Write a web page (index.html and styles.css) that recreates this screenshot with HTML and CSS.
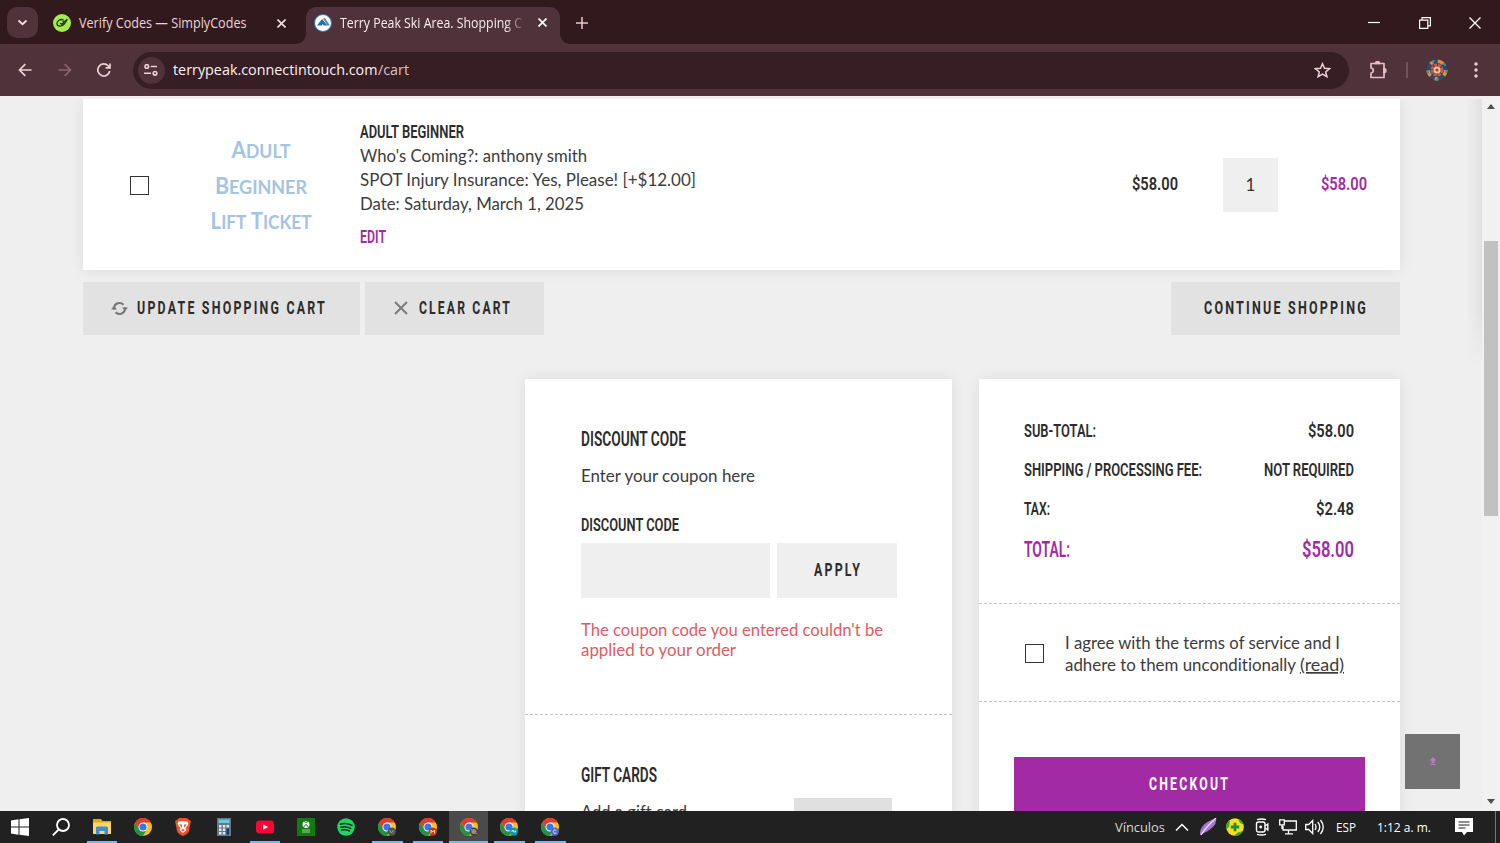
FILE: index.html
```html
<!DOCTYPE html>
<html lang="en">
<head>
<meta charset="utf-8">
<title>Terry Peak Ski Area. Shopping Cart</title>
<link rel="stylesheet" href="styles.css">
</head>
<body>
<svg class="defs" width="0" height="0">
  <symbol id="chrome" viewBox="0 0 18 18">
    <circle cx="9" cy="9" r="9" fill="#fbc116"/>
    <path d="M1.2 4.5A9 9 0 0 1 16.8 4.5H9L5.1 11.2Z" fill="#e33b2e"/>
    <path d="M1.2 4.5A9 9 0 0 0 9 18l3.9-6.8H5.1Z" fill="#229342"/>
    <circle cx="9" cy="9" r="4.5" fill="#fff"/><circle cx="9" cy="9" r="3.6" fill="#3479ea"/>
  </symbol>
</svg>
<div class="screen">
  <header class="tabs">
    <div class="tab-menu"><svg width="30" height="30" fill="none" stroke="#f3dfe2" stroke-width="1.8"><path d="m11.5 13.500 4 3.700 4-3.700"/></svg></div>
    <div class="tab">
      <svg width="18" height="18" viewBox="0 0 18 18"><circle cx="9" cy="9" r="9" fill="#a4ec4b"/><path d="M10.500 5.800C7 4.800 4 6.800 4 9.500c0 3.300 5.500 3.800 8-.5L14.300 5.200 8.800 10.300 7 9M9.500 7.300l4 .3" fill="none" stroke="#1f3414" stroke-width="1.300"/></svg>
      <svg class="t ui" width="168" height="20"><text y="15" textLength="167.500" lengthAdjust="spacingAndGlyphs">Verify Codes — SimplyCodes</text></svg>
      <svg class="close" width="9" height="9" stroke="#f3dfe2" stroke-width="1.600"><path d="m.5.5 8 8m0-8-8 8"/></svg>
    </div>
    <div class="tab active">
      <svg width="18" height="18" viewBox="0 0 18 18"><circle cx="9" cy="9" r="8.500" fill="#fff" stroke="#2c75ad"/><path d="m9 4.500 2-.5 5 7.500h-2.500z" fill="#6c8399"/><path d="M3 11.500 8 5l5.500 6.500H10L8.500 10 8 11.500z" fill="#1d6fb0"/></svg>
      <svg class="t ui bright fade" width="183" height="20"><text y="15" textLength="182" lengthAdjust="spacingAndGlyphs">Terry Peak Ski Area. Shopping C</text></svg>
      <svg class="close" width="9" height="9" stroke="#fff" stroke-width="1.700"><path d="m.5.5 8 8m0-8-8 8"/></svg>
    </div>
    <svg class="plus" width="12" height="12" stroke="#ebc6cc" stroke-width="1.500"><path d="M6 0v12M0 6h12"/></svg>
    <div class="window">
      <svg width="12" height="12" stroke="#fff" stroke-width="1.200"><path d="M0 5.500h12"/></svg>
      <svg width="12" height="12" fill="none" stroke="#fff" stroke-width="1.200"><path d="M.6 3.100h8.200v8.200H.6zM3 3V.6h8.400v8.200H9"/></svg>
      <svg width="12" height="12" stroke="#fff" stroke-width="1.300"><path d="m.5.5 11 11m0-11-11 11"/></svg>
    </div>
  </header>
  <nav class="toolbar">
    <svg class="nav" width="14" height="14" fill="none" stroke="#efd0d6" stroke-width="1.700"><path d="M13.500 7H1.500M7.300 1.200 1.500 7l5.800 5.800"/></svg>
    <svg class="nav" width="14" height="14" fill="none" stroke="#8a656d" stroke-width="1.700"><path d="M.5 7h12M6.700 1.200 12.500 7l-5.800 5.800"/></svg>
    <svg class="nav" width="14" height="14" fill="none" stroke="#efd0d6" stroke-width="1.700"><path d="M12.700 8A6 6 0 1 1 11.300 3l1.500 1.500M13 .5v4.300H8.600"/></svg>
    <div class="omnibox">
      <span class="site"><svg width="14" height="12" fill="none" stroke="#efd0d6" stroke-width="1.600"><circle cx="2.800" cy="2.500" r="1.800"/><path d="M6.800 2.500H13M0 9.300h7"/><circle cx="11" cy="9.300" r="1.800"/></svg></span>
      <svg class="t url" width="205" height="20"><text y="15" textLength="204.500" lengthAdjust="spacingAndGlyphs">terrypeak.connectintouch.com</text></svg>
      <svg class="t url path" width="31" height="20"><text y="15" textLength="31" lengthAdjust="spacingAndGlyphs">/cart</text></svg>
      <svg class="star" width="17" height="16" fill="none" stroke="#efd0d6" stroke-width="1.500"><path d="m8.500 1.700 2 4.500 5 .5-3.800 3.200 1.200 4.800-4.400-2.600-4.400 2.600 1.200-4.800L1.500 6.700l5-.5z"/></svg>
    </div>
    <svg class="ext" width="19" height="18" fill="none" stroke="#e9bcc5" stroke-width="1.700"><path d="M2 2.500H15V16.500H2V12a2.300 2.500 0 0 0 0-5z" stroke-linejoin="round"/><path d="M6.500 2.500a2 1.800 0 0 1 4 0zM15 7.500a1.800 2 0 0 1 0 4z" fill="#e9bcc5"/></svg>
    <span class="sep"></span>
    <svg class="avatar" width="22" height="22" fill="none"><circle cx="11" cy="11" r="10.500" fill="#2e496a"/><circle cx="11" cy="11" r="8.800" stroke="#e78c38" stroke-width="3.500" stroke-dasharray="6 7 3 5"/><circle cx="11" cy="11" r="9.500" stroke="#329aa5" stroke-width="2" stroke-dasharray="3 10"/><circle cx="11" cy="11" r="5" stroke="#cd5a45" stroke-width="3" stroke-dasharray="3 1"/><circle cx="11" cy="11" r="3.500" fill="#f2c494"/><circle cx="11" cy="11" r="1.600" fill="#a73f3a"/></svg>
    <svg class="dots" width="4" height="16" fill="#efd0d6"><circle cx="2" cy="2" r="1.700"/><circle cx="2" cy="8" r="1.700"/><circle cx="2" cy="14" r="1.700"/></svg>
  </nav>

  <main class="page">
    <div class="content">
      <section class="item">
        <span class="check"></span>
        <svg class="art" width="102" height="92" text-anchor="middle">
          <text x="51" y="18" textLength="59" lengthAdjust="spacingAndGlyphs">A<tspan class="sc">DULT</tspan></text>
          <text x="51" y="54" textLength="92" lengthAdjust="spacingAndGlyphs">B<tspan class="sc">EGINNER</tspan></text>
          <text x="51" y="89" textLength="101" lengthAdjust="spacingAndGlyphs">L<tspan class="sc">IFT</tspan> T<tspan class="sc">ICKET</tspan></text>
        </svg>
        <div class="info">
          <svg class="t fj" width="104" height="20"><text y="15" textLength="104" lengthAdjust="spacingAndGlyphs">ADULT BEGINNER</text></svg>
          <svg class="t la" width="227" height="24"><text y="19" textLength="227" lengthAdjust="spacingAndGlyphs">Who's Coming?: anthony smith</text></svg>
          <svg class="t la" width="336" height="24"><text y="19" textLength="336" lengthAdjust="spacingAndGlyphs">SPOT Injury Insurance: Yes, Please! [+$12.00]</text></svg>
          <svg class="t la" width="224" height="24"><text y="19" textLength="224" lengthAdjust="spacingAndGlyphs">Date: Saturday, March 1, 2025</text></svg>
          <svg class="t fj pink" width="26" height="33"><text y="28" textLength="26" lengthAdjust="spacingAndGlyphs">EDIT</text></svg>
        </div>
        <svg class="t fj price" width="46" height="20"><text y="15" textLength="46" lengthAdjust="spacingAndGlyphs">$58.00</text></svg>
        <span class="qty">1</span>
        <svg class="t fj pink sum" width="46" height="20"><text y="15" textLength="46" lengthAdjust="spacingAndGlyphs">$58.00</text></svg>
      </section>
      <section class="actions">
        <div class="btn update"><svg width="17" height="15" fill="none" stroke="#777" stroke-width="2"><path d="M3 8.500V7A5.500 5.500 0 0 1 12.500 3.700M14 6.500V8A5.500 5.500 0 0 1 4.500 11.300"/><path d="M0 8.500h6L3 5zM11 6.500h6L14 10z" fill="#777" stroke="none"/></svg>
          <svg class="t fj wide" width="188" height="20"><text y="16" textLength="190" lengthAdjust="spacingAndGlyphs">UPDATE SHOPPING CART</text></svg></div>
        <div class="btn clear"><svg width="14" height="14" stroke="#777" stroke-width="1.800"><path d="m1 1 12 12m0-12L1 13"/></svg>
          <svg class="t fj wide" width="91" height="20"><text y="16" textLength="93" lengthAdjust="spacingAndGlyphs">CLEAR CART</text></svg></div>
        <div class="btn continue"><svg class="t fj wide" width="162" height="20"><text y="16" textLength="164" lengthAdjust="spacingAndGlyphs">CONTINUE SHOPPING</text></svg></div>
      </section>
      <section class="panels">
        <div class="panel coupon">
          <div class="coupon-box">
            <svg class="t fj h" width="105" height="20"><text y="15" textLength="105" lengthAdjust="spacingAndGlyphs">DISCOUNT CODE</text></svg>
            <svg class="t la enter" width="174" height="20"><text y="15" textLength="174" lengthAdjust="spacingAndGlyphs">Enter your coupon here</text></svg>
            <svg class="t fj label" width="98" height="20"><text y="15" textLength="98" lengthAdjust="spacingAndGlyphs">DISCOUNT CODE</text></svg>
            <div class="field"><span class="input"></span><span class="apply"><svg class="t fj wide" width="46" height="20"><text y="15" textLength="48" lengthAdjust="spacingAndGlyphs">APPLY</text></svg></span></div>
            <svg class="t la error" width="302" height="20"><text y="15" textLength="302" lengthAdjust="spacingAndGlyphs">The coupon code you entered couldn't be</text></svg>
            <svg class="t la error2" width="155" height="20"><text y="15" textLength="155" lengthAdjust="spacingAndGlyphs">applied to your order</text></svg>
          </div>
          <div class="gift">
            <div class="gift-text">
              <svg class="t fj h" width="76" height="20"><text y="15" textLength="76" lengthAdjust="spacingAndGlyphs">GIFT CARDS</text></svg>
              <svg class="t la add" width="106" height="20"><text y="15" textLength="106" lengthAdjust="spacingAndGlyphs">Add a gift card</text></svg>
            </div>
            <span class="gift-btn"></span>
          </div>
        </div>
        <div class="panel totals">
          <div class="rows">
            <div class="row"><svg class="t fj" width="72" height="20"><text y="15" textLength="72" lengthAdjust="spacingAndGlyphs">SUB-TOTAL:</text></svg><svg class="t fj" width="46" height="20"><text y="15" textLength="46" lengthAdjust="spacingAndGlyphs">$58.00</text></svg></div>
            <div class="row"><svg class="t fj" width="178" height="20"><text y="15" textLength="178" lengthAdjust="spacingAndGlyphs">SHIPPING / PROCESSING FEE:</text></svg><svg class="t fj" width="90" height="20"><text y="15" textLength="90" lengthAdjust="spacingAndGlyphs">NOT REQUIRED</text></svg></div>
            <div class="row"><svg class="t fj" width="26" height="20"><text y="14.500" textLength="26" lengthAdjust="spacingAndGlyphs">TAX:</text></svg><svg class="t fj" width="38" height="20"><text y="14.500" textLength="38" lengthAdjust="spacingAndGlyphs">$2.48</text></svg></div>
            <div class="row grand"><svg class="t fj pink big" width="46" height="20"><text y="17" textLength="46" lengthAdjust="spacingAndGlyphs">TOTAL:</text></svg><svg class="t fj pink big" width="52" height="20"><text y="17" textLength="52" lengthAdjust="spacingAndGlyphs">$58.00</text></svg></div>
          </div>
          <div class="terms">
            <span class="check"></span>
            <div class="terms-text">
              <svg class="t la" width="275" height="22"><text y="15" textLength="275" lengthAdjust="spacingAndGlyphs">I agree with the terms of service and I</text></svg>
              <div class="line"><svg class="t la" width="231" height="22"><text y="15" textLength="231" lengthAdjust="spacingAndGlyphs">adhere to them unconditionally</text></svg>
              <svg class="t la read" width="44" height="22"><text y="15" textLength="44" lengthAdjust="spacingAndGlyphs">(read)</text></svg></div>
            </div>
          </div>
          <div class="pay"><div class="checkout"><svg class="t fj wide white" width="79" height="20"><text y="15" textLength="81" lengthAdjust="spacingAndGlyphs">CHECKOUT</text></svg></div></div>
        </div>
      </section>
    </div>
    <div class="edge"></div>
    <div class="scroll">
      <svg width="8" height="5" fill="#505050"><path d="M0 5 4 0l4 5z"/></svg>
      <span class="thumb"></span>
      <svg class="down" width="8" height="5" fill="#505050"><path d="m0 0 4 5 4-5z"/></svg>
    </div>
    <div class="top"><svg width="8" height="9" fill="#b77cc0"><path d="M4 0 .5 3.500H2.500v2.500h3V3.500h2zM1.500 6.800h5v1.200h-5z"/></svg></div>
  </main>

  <footer class="taskbar">
    <div class="apps">
      <span class="app"><svg width="18" height="18" fill="#fff"><path d="M0 2.500 7.500 1.300v7.300H0zM8.500 1.200 18 0v8.600H8.500zM0 9.500h7.500v7.200L0 15.600zM8.500 9.500H18V18l-9.500-1.200z"/></svg></span>
      <span class="app"><svg width="18" height="18" fill="none" stroke="#fff" stroke-width="1.800"><circle cx="11" cy="7" r="6"/><path d="M6.700 11.500.8 17.400"/></svg></span>
      <span class="app on"><svg width="18" height="18"><path d="M0 1h8l1.500 2H18v13H0z" fill="#e9a41e"/><path d="M0 4.500h18V16H0z" fill="#fbd76d"/><path d="M3 16.500V10q0-1.500 1.500-1.500h9Q15 8.500 15 10v6.500h-3.500V13h-5v3.500z" fill="#3e8fd0"/></svg></span>
      <span class="app"><svg width="18" height="18"><use href="#chrome"/></svg></span>
      <span class="app"><svg width="16" height="18"><path d="M4 0h8l1.500 1.500L16 3l-.7 3L14 13q-1 3-6 5-5-2-6-5L.7 6 0 3l2.500-1.500z" fill="#f0502a"/><path d="m8 3 4.500.5L13.500 6l-3 4.500L11.500 12 8 15l-3.500-3 1-1.500-3-4.500 1-2.500z" fill="#fff"/><path d="m4.500 6 2.500.8v3L5.500 8zM11.500 6 9 6.800v3L10.500 8zM6 12l2-1 2 1-2 1.500z" fill="#f0502a"/></svg></span>
      <span class="app"><svg width="14" height="18"><path d="M0 0h14v18H0z" fill="#64798a"/><path d="M1.500 1.500h11V5h-11z" fill="#63cbe5"/><path d="M2 7h2.500v2.500H2zm3.800 0h2.500v2.500H5.800zm3.700 0H12v2.500H9.500zM2 10.500h2.500V13H2zm3.800 0h2.500V13H5.800zM2 14h2.500v2.500H2zm3.800 0h2.500v2.500H5.800z" fill="#e2eaf0"/><path d="M9.500 10.500H12v6H9.500z" fill="#0f3d64"/></svg></span>
      <span class="app on"><svg width="18" height="14"><rect width="18" height="13" y=".5" rx="3.500" fill="#f60738"/><path d="m7 4.200 5 2.800-5 2.800z" fill="#fff"/></svg></span>
      <span class="app"><svg width="18" height="18"><path d="M0 0h18v18H0z" fill="#107c10"/><circle cx="9" cy="6.500" r="3.500" fill="#fff"/><path d="m6.500 9.300 2.500-3 2.500 3M7 3.500l2 1 2-1" fill="none" stroke="#107c10"/><path d="M5 12h8M5 14h8" stroke="#a5cfa5"/></svg></span>
      <span class="app"><svg width="18" height="18"><circle cx="9" cy="9" r="8.800" fill="#1ed760"/><path d="M3.500 6.200q6-1.800 11.500 1.300M4 9.200q5-1.400 9.700 1.200M4.500 12q4.200-1 8 1" fill="none" stroke="#15301f" stroke-width="1.500" stroke-linecap="round"/></svg></span>
      <span class="app on"><svg width="18" height="18"><use href="#chrome"/><circle cx="13.800" cy="13.600" r="4.200" fill="#4d5651"/><path d="m11.500 12 2 3 2-3" fill="none" stroke="#9aa09b"/></svg></span>
      <span class="app on"><svg width="18" height="18"><use href="#chrome"/><circle cx="13.800" cy="13.600" r="4.200" fill="#c53a16"/><path d="M12 15.500v-3.500l1.800 2 1.800-2v3.500" fill="none" stroke="#ffd6c7"/></svg></span>
      <span class="app on current"><svg width="18" height="18"><use href="#chrome"/><circle cx="13.800" cy="13.600" r="4.200" fill="#30435f"/><circle cx="13.800" cy="13.600" r="2.500" fill="#b88369"/><path d="m10.500 11 1.500 1m4 3 1.200 1" stroke="#e28b3e"/></svg></span>
      <span class="app on"><svg width="18" height="18"><use href="#chrome"/><circle cx="13.800" cy="13.600" r="4.200" fill="#0799a8"/><path d="M12 14v-1.500h1.800V14h1.800v-1.500" fill="none" stroke="#bcf1f3"/></svg></span>
      <span class="app on"><svg width="18" height="18"><use href="#chrome"/><circle cx="13.800" cy="13.600" r="4.200" fill="#5669c0"/><path d="M15.300 12q-3-1-3 1.600t3 1.600" fill="none" stroke="#ccd4ff"/></svg></span>
    </div>
    <div class="tray">
      <svg class="t ui links" width="50" height="20"><text y="15" textLength="50" lengthAdjust="spacingAndGlyphs">Vínculos</text></svg>
      <svg class="chev" width="14" height="8" fill="none" stroke="#fff" stroke-width="1.500"><path d="m1 7.500 6-6 6 6"/></svg>
      <svg class="feather" width="17" height="18"><path d="M0 17Q-1 6 16 0q2 9-14 16z" fill="#a875d2"/><path d="M1 17Q6 9 16 0" fill="none" stroke="#eadafb" stroke-width="1.300"/></svg>
      <svg class="idm" width="18" height="18"><circle cx="9" cy="9" r="8.800" fill="#f4df25"/><path d="M4 2a8.800 8.800 0 0 0-3.500 9L3 9zM12 .8a8.800 8.800 0 0 1 5.500 5.700L14 5zM17 13a8.800 8.800 0 0 1-9 4.500l4-3z" fill="#35a535"/><path d="M9 4.800v8.400M4.800 9h8.400" stroke="#258e31" stroke-width="2.800"/></svg>
      <svg class="meet" width="14" height="18" fill="none" stroke="#fff" stroke-width="1.400"><rect x="1.500" y="4" width="8.500" height="10" rx="2"/><path d="m10 8 2.800-2v6L10 10M2 1.700q4.500-1.500 9 0M2 16.300q4.500 1.500 9 0"/><circle cx="5.700" cy="9" r=".7"/></svg>
      <svg class="net" width="18" height="16" fill="none" stroke="#fff" stroke-width="1.300"><path d="M6 2h11.300v9H4V7M9.500 11v3.500M6 14.800h8M.7.800h4.600v5H.7zM3 6v4"/></svg>
      <svg class="vol" width="19" height="16" fill="none" stroke="#fff" stroke-width="1.300"><path d="M.7 5.500h3l4-4v13l-4-4h-3zM10 5q2 3 0 6M12.800 3q4 5 0 10M15.500 1q5.500 7 0 14"/></svg>
      <svg class="t ui lang" width="20" height="20"><text y="15" textLength="20" lengthAdjust="spacingAndGlyphs">ESP</text></svg>
      <svg class="t ui clock" width="54" height="20"><text y="15" textLength="54" lengthAdjust="spacingAndGlyphs">1:12 a. m.</text></svg>
      <svg class="note" width="18" height="18"><path d="M0 0h18v14h-6l-3 3.500L7 14H0z" fill="#fff"/><path d="M3.500 4h11M3.500 7h11M3.500 10h7" stroke="#222" stroke-width="1.200"/></svg>
      <span class="peek"></span>
    </div>
  </footer>
</div>
</body>
</html>
```
FILE: styles.css
```css
* { box-sizing: border-box; }
body { margin: 0; font-family: Lato, sans-serif; }
svg { display: block; flex: none; }
.defs { position: absolute; }
.screen { width: 1500px; height: 843px; overflow: hidden; display: flex; flex-direction: column; }

.t { overflow: visible; }
.fj { font: 600 18px Roboto, sans-serif; fill: #2c2c2c; }
.fj.h { font-size: 19.500px; }
.fj.big { font-size: 22.500px; }
.fj.wide { letter-spacing: 3.200px; font-weight: 700; }
.fj.pink { fill: #a32aa5; }
.fj.white { fill: #fff; }
.la { font: 400 17px Lato, sans-serif; fill: #3c3c3c; font-variant-ligatures: none; }
.ui { font: 400 14px "Open Sans", "Noto Sans", sans-serif; fill: #ecd3d7; }
.ui.bright { fill: #fbecef; }
.url { font: 400 15px "Open Sans", "Noto Sans", sans-serif; fill: #fdf1f3; }
.url.path { fill: #dcc0c5; }

/* browser tabs */
.tabs { height: 44px; background: #32191e; display: flex; }
.tab-menu { width: 31px; height: 31px; margin: 7px 0 0 7px; border-radius: 10px; background: #50323a; }
.tab { width: 254px; height: 30px; margin: 8px 0 0 15px; display: flex; align-items: center; }
.tab .t { margin-left: 8.400px; height: 20px; }
.tab .close { margin-left: 29.500px; }
.tab.active { height: 37px; margin: 7px 0 0 -1px; padding: 0 0 6px 8px; background: #50323a; border-radius: 10px 10px 0 0; position: relative; }
.tab.active::before, .tab.active::after { content: ""; position: absolute; bottom: 0; width: 10px; height: 10px; }
.tab.active::before { left: -10px; background: radial-gradient(circle at 0 0, transparent 9.500px, #50323a 10px); }
.tab.active::after { right: -10px; background: radial-gradient(circle at 100% 0, transparent 9.500px, #50323a 10px); }
.tab.active .close { margin-left: 15px; }
.fade { -webkit-mask-image: linear-gradient(90deg, #000 165px, transparent 186px); mask-image: linear-gradient(90deg, #000 165px, transparent 186px); }
.plus { margin: 16.500px 0 0 16px; }
.window { margin: 16.500px 19px 0 auto; display: flex; gap: 38.500px; }

.toolbar { height: 52px; background: #50323a; display: flex; align-items: center; padding-left: 18px; }
.nav { margin-right: 25.500px; }
.omnibox { width: 1216px; height: 37px; margin-left: -4px; border-radius: 19px; background: #371e24; display: flex; align-items: center; padding-left: 5px; }
.site { width: 27px; height: 27px; border-radius: 50%; background: #50323a; display: grid; place-items: center; }
.site + .t { margin-left: 8px; }
.star { margin-left: auto; margin-right: 18px; }
.ext { margin-left: 20px; }
.sep { width: 2px; height: 16px; background: #74525a; margin-left: 18px; }
.avatar { margin-left: 18px; }
.dots { margin-left: 26px; }

/* store page */
.page { height: 715px; background: #efefef; display: flex; position: relative; overflow: hidden; border-top: 3px solid #f4edee; flex: none; }
.content { width: 1465px; padding-left: 83px; flex: none; }
.item { width: 1317.400px; height: 170.500px; background: #fff; box-shadow: 0 0 14px rgba(0,0,0,.08); display: flex; align-items: flex-start; position: relative; }
.check { width: 19px; height: 19px; border: 1.500px solid #333; background: #fff; flex: none; }
.item .check { margin: 77px 0 0 47px; }
.art { margin: 41px 0 0 61.400px; overflow: visible; font: 700 22px Lato, sans-serif; fill: #a3c4e4; }
.sc { font-size: 18.500px; }
.info { width: 772px; padding-top: 24px; margin-left: 47.800px; }
.price { margin-top: 76px; }
.qty { width: 55px; height: 54.500px; margin: 58.500px 0 0 44.800px; background: #efefef; display: grid; place-items: center; font-size: 17px; color: #333; }
.sum { margin: 76px 0 0 43px; }

.actions { width: 1317.400px; margin-top: 12px; display: flex; gap: 5.500px; position: relative; }
.btn { height: 53.500px; background: #e2e2e2; display: flex; align-items: center; }
.update { width: 276.500px; padding-left: 28px; gap: 9px; }
.clear { width: 179px; padding-left: 29px; gap: 11px; }
.continue { width: 229.500px; padding-left: 33px; margin-left: auto; }

.panels { display: flex; margin: 44px 0 0 442.400px; gap: 26.500px; }
.panel { height: 470px; background: #fff; box-shadow: 0 0 14px rgba(0,0,0,.08); }
.coupon { width: 427px; }
.coupon-box { height: 336px; padding: 52px 55.500px 0; border-bottom: 1px dashed #c4c4c4; }
.enter { margin-top: 16px; }
.label { margin-top: 29px; }
.field { display: flex; gap: 7px; margin: 7px 0 0 -.400px; }
.input { width: 189.500px; height: 55px; background: #efefef; }
.apply { width: 120.500px; height: 55px; background: #efefef; display: grid; place-items: center; }
.error { margin-top: 23px; }
.error, .error2 { fill: #dc5c63; }
.gift { display: flex; padding: 52px 60.500px 0 55.500px; justify-content: space-between; }
.add { margin-top: 15.500px; }
.gift-btn { width: 97.500px; height: 50px; margin-top: 31px; background: #e0e0e0; }

.totals { width: 421.500px; }
.rows { height: 225px; padding: 43px 46.500px 0 45px; border-bottom: 1px dashed #c4c4c4; }
.row { display: flex; justify-content: space-between; height: 39.200px; }
.row.grand { height: 20px; }
.terms { height: 98px; display: flex; padding: 40px 0 0 46px; border-bottom: 1px dashed #c4c4c4; }
.terms-text { margin: -10.500px 0 0 21px; }
.line { display: flex; justify-content: space-between; width: 279px; }
.read { text-decoration: underline; }
.pay { padding: 55px 35px 0; }
.checkout { height: 60px; background: #a32aa5; padding: 18px 0 0 135.500px; }

.edge { width: 17px; height: 265px; flex: none; background: linear-gradient(90deg, #efefef, #e1e1e1); -webkit-mask-image: linear-gradient(#000 80%, transparent); mask-image: linear-gradient(#000 80%, transparent); }
.scroll { width: 18px; background: #f1f1f1; display: flex; flex-direction: column; align-items: center; padding: 5px 0 7px; }
.thumb { width: 14px; height: 275px; background: #c1c1c1; margin-top: 132px; }
.down { margin-top: auto; }
.top { position: absolute; left: 1405px; top: 635px; width: 55px; height: 55px; background: #727272; display: grid; place-items: center; }

/* taskbar */
.taskbar { height: 32px; flex: none; background: #212121; display: flex; justify-content: space-between; }
.apps { display: flex; }
.app { width: 40.750px; display: grid; place-items: center; position: relative; }
.app.on::after { content: ""; position: absolute; left: 5px; right: 5px; bottom: 0; height: 2px; background: #76b9ed; }
.app.current { background: linear-gradient(90deg, transparent 1px, #4b4b4b 1px, #4b4b4b 40px, transparent 40px); }
.app.current::after { left: 1px; right: 1px; }
.tray { width: 385px; display: flex; align-items: center; }
.tray .ui { font-size: 13.500px; fill: #fff; }
.tray .links { fill: #d8d8d8; }
.chev { margin-left: 10px; }
.feather { margin-left: 11px; }
.idm { margin-left: 9px; }
.meet { margin-left: 11px; }
.net { margin-left: 10px; }
.vol { margin-left: 8px; }
.lang { margin-left: 12px; }
.clock { margin-left: 21px; }
.note { margin-left: 24px; }
.peek { margin-left: 22px; width: 1px; height: 32px; background: #777; }
```
